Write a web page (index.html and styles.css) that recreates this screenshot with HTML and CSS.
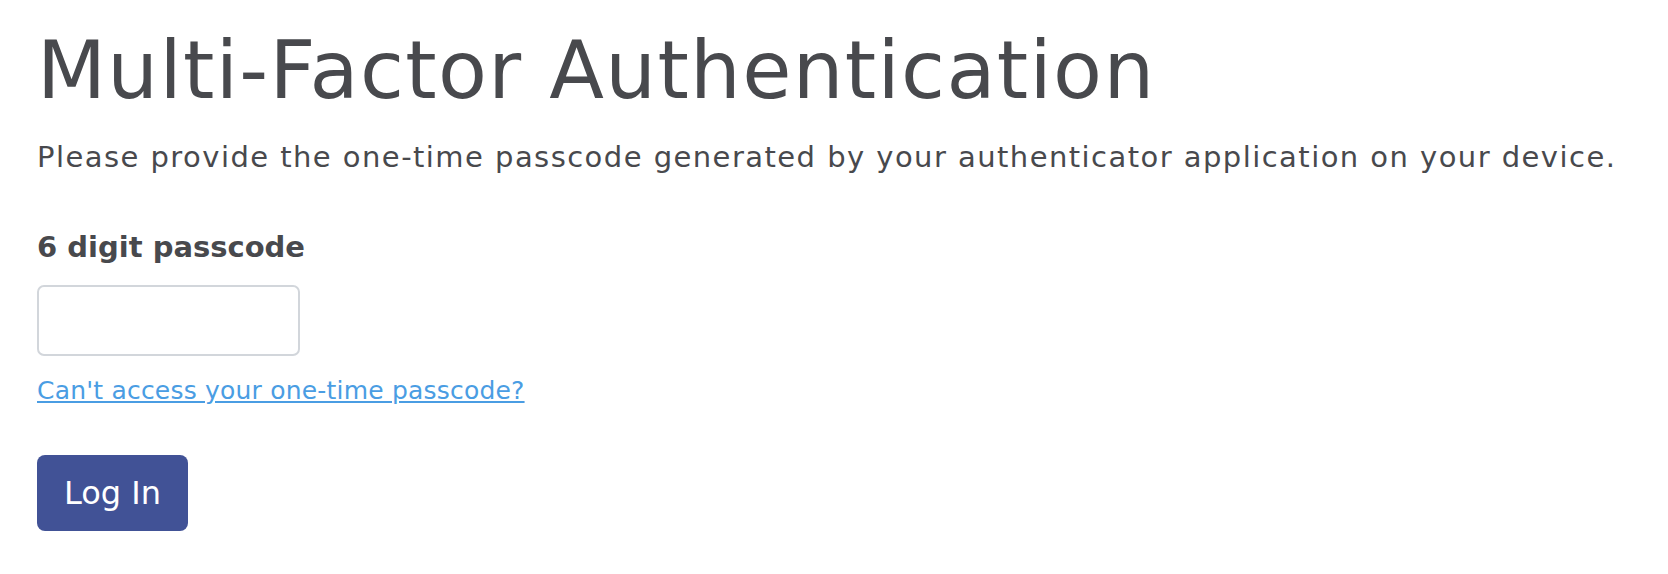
FILE: index.html
```html
<!DOCTYPE html>
<html lang="en">
<head>
  <meta charset="UTF-8">
  <title>Multi-Factor Authentication</title>
  <link rel="stylesheet" href="styles.css">
</head>
<body>
  <div class="container">
    <h1>Multi-Factor Authentication</h1>
    <p class="intro">Please provide the one-time passcode generated by your authenticator application on your device.</p>

    <form class="mfa-form">
      <label for="passcodeInput">6 digit passcode</label>
      <input type="text" id="passcodeInput" inputmode="numeric" autocomplete="one-time-code">

      <a href="#" class="help-link">Can't access your one-time passcode?</a>

      <button type="submit" class="login-btn">Log In</button>
    </form>
  </div>
</body>
</html>
```

FILE: styles.css
```css
body {
  margin: 0;
  background-color: #ffffff;
  font-family: 'DejaVu Sans', 'Noto Sans', sans-serif;
  color: #48494d;
}

.container {
  padding: 23px 37px;
}

h1 {
  margin: 0;
  font-size: 80px;
  line-height: 96px;
  font-weight: 400;
  letter-spacing: 1.35px;
  color: #48494d;
}

.intro {
  margin: 18px 0 0;
  font-size: 29px;
  line-height: 40px;
  letter-spacing: 1.45px;
}

.mfa-form {
  display: flex;
  flex-direction: column;
  align-items: flex-start;
  margin-top: 50px;
}

label {
  font-size: 29px;
  line-height: 40px;
  font-weight: 700;
}

input[type="text"] {
  margin-top: 18px;
  width: 263px;
  height: 71px;
  box-sizing: border-box;
  padding: 10px 16px;
  border: 2px solid #d2d6db;
  border-radius: 7px;
  font-family: inherit;
  font-size: 28px;
  color: #48494d;
  outline: none;
}

.help-link {
  margin-top: 18px;
  font-size: 25px;
  line-height: 34px;
  letter-spacing: 0.2px;
  color: #4a9de3;
  text-decoration: underline;
  text-underline-offset: 2px;
}

.login-btn {
  margin-top: 47px;
  height: 76px;
  padding: 0 27px;
  border: none;
  border-radius: 8px;
  background-color: #415296;
  color: #ffffff;
  font-family: inherit;
  font-size: 32px;
  line-height: 76px;
  cursor: pointer;
}

.login-btn:hover {
  background-color: #374785;
}
```
